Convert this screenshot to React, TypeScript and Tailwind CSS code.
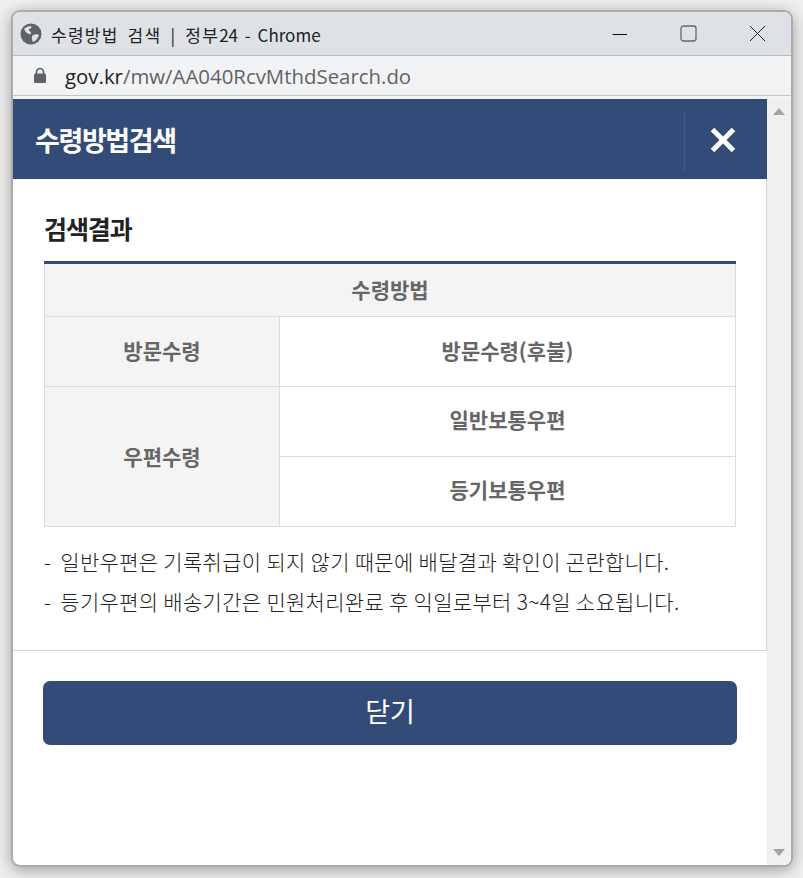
import React from 'react';

const font = "font-['Noto_Sans_CJK_KR','Noto_Sans',sans-serif]";

const Cell: React.FC<{ className?: string; children: React.ReactNode }> = ({ className = '', children }) => (
  <div className={`flex items-center justify-center text-[21px] font-bold tracking-[0px] text-[#666] ${className}`}>
    {children}
  </div>
);

export default function App() {
  return (
    <div className={`h-[878px] w-[803px] overflow-hidden bg-[#f0f0f0] pl-[11px] pt-[10px] ${font}`}>
      <div className="flex h-[857px] w-[782px] flex-col overflow-hidden rounded-[9px] border-2 border-[#ababab] bg-white shadow-[0_3px_16px_rgba(0,0,0,0.35)]">
        {/* title bar */}
        <div className="flex h-[44px] shrink-0 items-center border-b border-[#b9bbbd] bg-[#dee1e6] pl-[7px]">
          <svg width="22" height="22" viewBox="0 0 22 22" className="shrink-0">
            <circle cx="11" cy="11" r="10.5" fill="#5f6368" />
            <path d="M4 6c2-2 5-3 7-3 1 1 0 3-2 3-1 2 2 2 2 4s-3 1-4 0-2-2-3-4zM13 12c2-1 5-1 6 0-1 3-3 6-6 7-1-2-2-5 0-7z" fill="#dee1e6" />
          </svg>
          <span className="mt-[1px] ml-[9px] text-[17px] leading-none text-[#222]">
            <span className="tracking-[1.25px] [word-spacing:4px]">수령방법 검색 | 정부</span>24<span className="[word-spacing:3px]"> - Chrome</span>
          </span>
          <div className="ml-auto flex items-center">
            <svg width="16" height="16" viewBox="0 0 16 16" className="mr-[52px]">
              <path d="M0.5 8.5h14.5" stroke="#111" strokeWidth="1" />
            </svg>
            <svg width="17" height="17" viewBox="0 0 17 17" className="mr-[52px]">
              <rect x="1" y="1" width="15" height="15" rx="2.5" fill="none" stroke="#666" strokeWidth="1.3" />
            </svg>
            <svg width="17" height="17" viewBox="0 0 17 17" className="mr-[25px]">
              <path d="M1 1l15 15M16 1L1 16" stroke="#222" strokeWidth="1" />
            </svg>
          </div>
        </div>
        {/* address bar */}
        <div className="flex h-[40px] shrink-0 items-center border-b border-[#c4c4c4] bg-[#f1f3f4] pl-[20px]">
          <svg width="14" height="17" viewBox="0 0 14 17" className="shrink-0">
            <path d="M3.5 7V5a3.5 3.5 0 0 1 7 0v2" fill="none" stroke="#5f6368" strokeWidth="1.7" />
            <rect x="1" y="6.5" width="12" height="9.5" rx="1.5" fill="#5f6368" />
          </svg>
          <span className="mt-[1px] ml-[18px] font-['Open_Sans',sans-serif] text-[20.4px] leading-none text-[#5f6368]">
            <span className="text-[#202124]">gov.kr</span>/mw/AA040RcvMthdSearch.do
          </span>
        </div>
        <div className="h-[3px] shrink-0 bg-[#f1f3f4]" />
        {/* page */}
        <div className="flex min-h-0 flex-1">
          <div className="flex w-[754px] flex-col">
            <div className="flex h-[80px] shrink-0 items-center bg-[#334b77] pt-[2px]">
              <h1 className="ml-[22px] text-[27px] font-bold tracking-[-1.4px] text-white">수령방법검색</h1>
              <div className="ml-auto h-[60px] w-px translate-y-[1px] bg-[#465c85]" />
              <svg width="28" height="28" viewBox="0 0 28 28" className="mr-[30px] ml-[24px]">
                <path d="M3.5 3.5l21 21M24.5 3.5l-21 21" stroke="#fff" strokeWidth="5" />
              </svg>
            </div>
            <div className="flex h-[472px] shrink-0 flex-col border-r border-b border-[#d5d5d5] pr-[30px] pl-[31px] pt-[31px]">
              <h2 className="text-[25px] leading-[36px] font-bold tracking-[-1.1px] text-[#222]">검색결과</h2>
              <div className="mt-[15px] border-t-[3px] border-[#334b77]">
                <div className="grid grid-cols-[235px_1fr] grid-rows-[53px_70px_70px_70px] border-r border-l border-[#ddd]">
                  <Cell className="col-span-2 border-b border-[#ddd] bg-[#f4f4f4]">수령방법</Cell>
                  <Cell className="border-r border-b border-[#ddd] bg-[#f4f4f4] pb-[2px]">방문수령</Cell>
                  <Cell className="border-b border-[#ddd] pb-[2px]">방문수령(후불)</Cell>
                  <Cell className="row-span-2 border-r border-b border-[#ddd] bg-[#f4f4f4]">우편수령</Cell>
                  <Cell className="border-b border-[#ddd] pb-[4px]">일반보통우편</Cell>
                  <Cell className="border-b border-[#ddd] pb-[4px]">등기보통우편</Cell>
                </div>
              </div>
              <ul className="mt-[16px] flex flex-col gap-[4px] text-[21px] leading-[36px] font-light tracking-[0.3px] text-[#222]">
                <li className="flex gap-[9px]"><span>-</span><span>일반우편은 기록취급이 되지 않기 때문에 배달결과 확인이 곤란합니다.</span></li>
                <li className="flex gap-[9px]"><span>-</span><span>등기우편의 배송기간은 민원처리완료 후 익일로부터 3~4일 소요됩니다.</span></li>
              </ul>
            </div>
            <div className="px-[30px] pt-[30px]">
              <button className="h-[64px] w-full rounded-[7px] bg-[#334b77] pb-[6px] text-[27px] leading-none text-white">닫기</button>
            </div>
          </div>
          <div className="flex w-[24px] flex-col items-center justify-between bg-[#f0f0f0] py-[9px]">
            <svg width="12" height="7" viewBox="0 0 12 7"><path d="M6 0l6 7H0z" fill="#a3a3a3" /></svg>
            <svg width="12" height="7" viewBox="0 0 12 7"><path d="M0 0h12L6 7z" fill="#a3a3a3" /></svg>
          </div>
        </div>
      </div>
    </div>
  );
}
